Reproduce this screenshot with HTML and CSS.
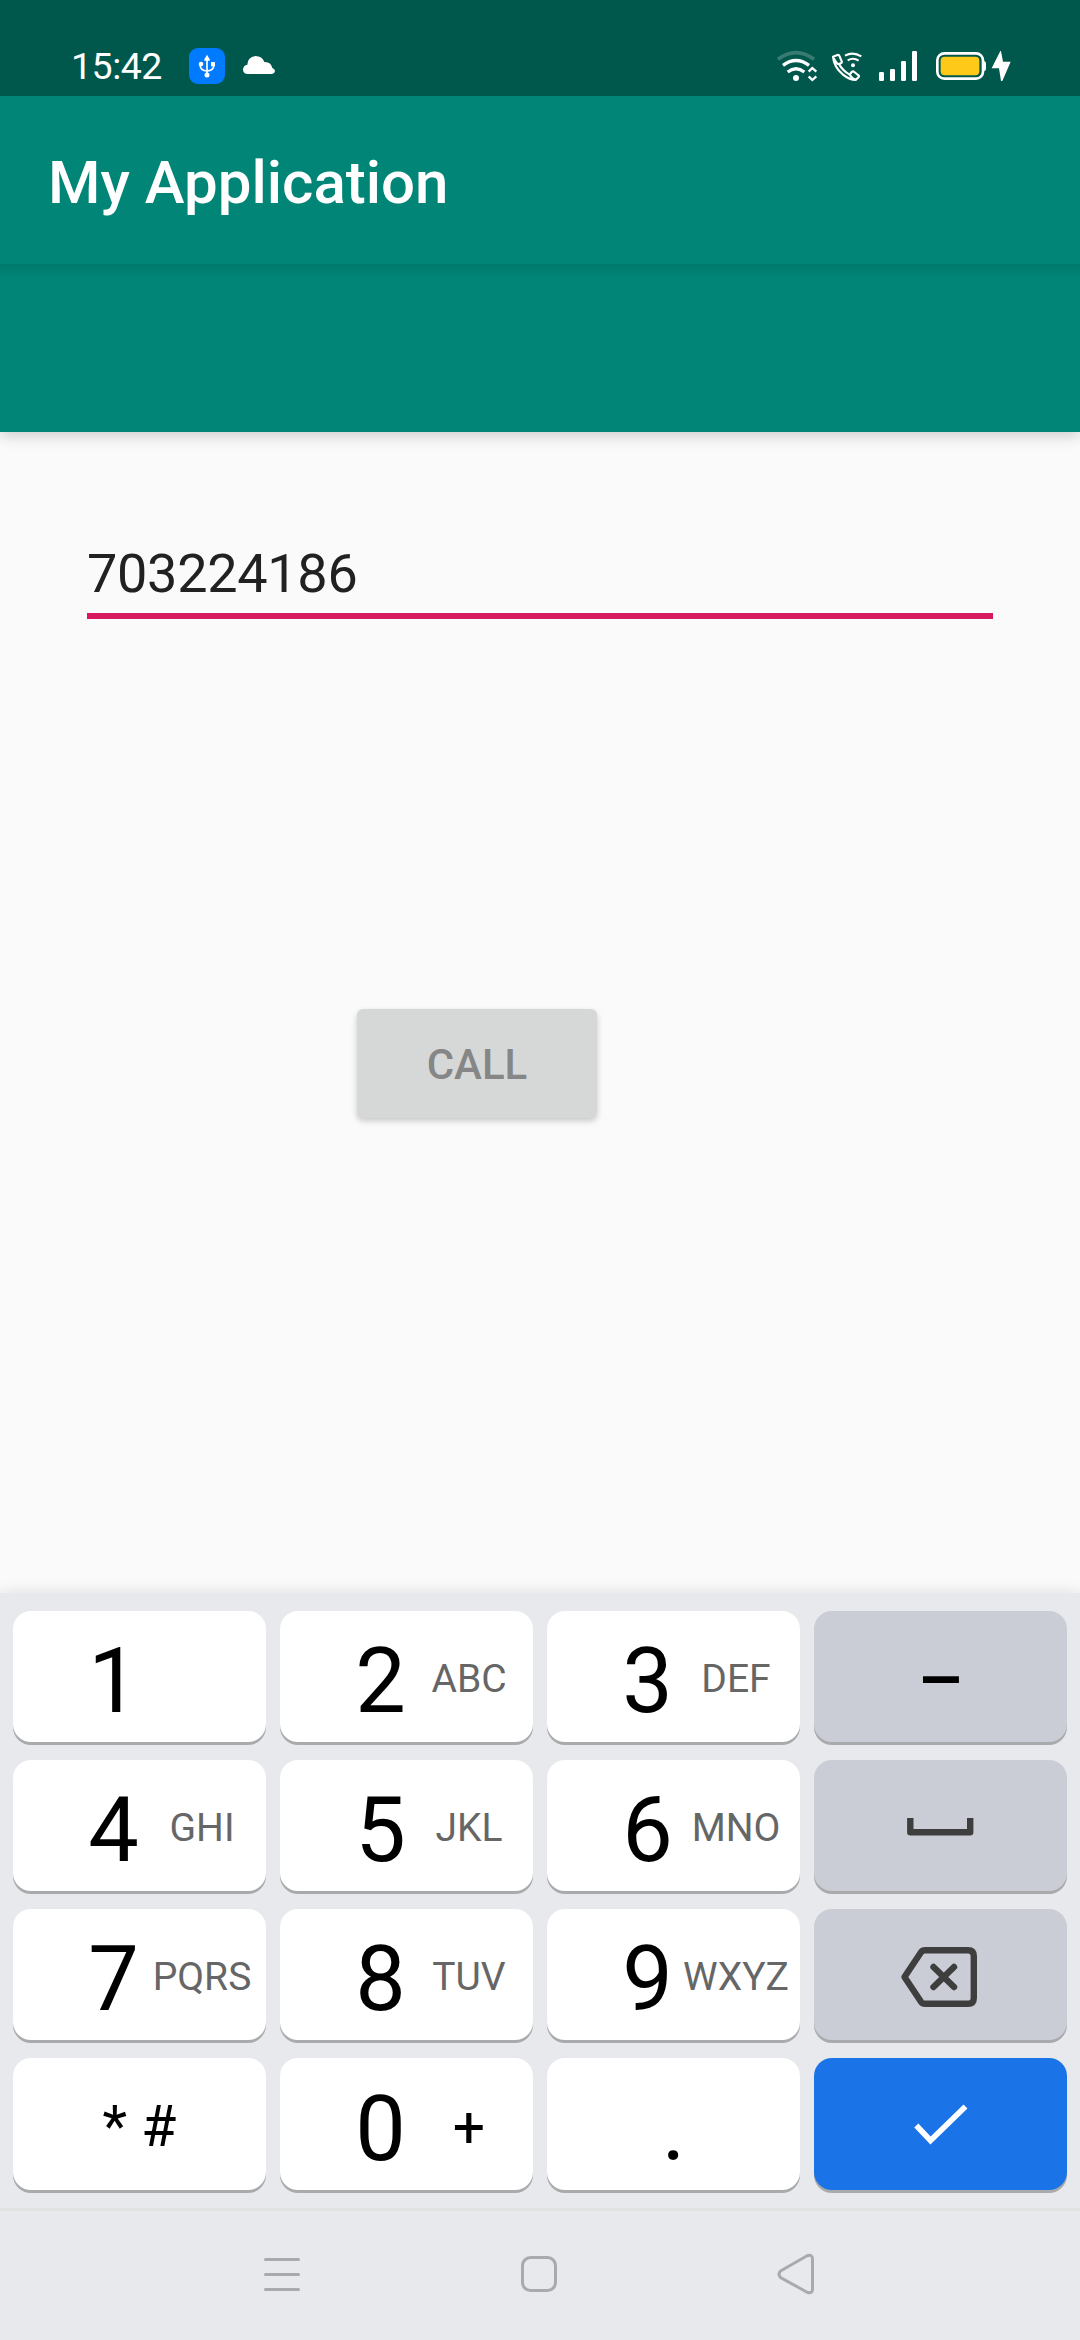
FILE: index.html
```html
<!DOCTYPE html>
<html lang="en">
<head>
<meta charset="utf-8">
<title>My Application</title>
<link rel="stylesheet" href="styles.css">
</head>
<body>
<div class="screen">
  <header class="status-bar">
    <span class="clock">15:42</span>
    <span class="usb-badge">
      <svg width="36" height="36" viewBox="0 0 108 108" fill="none" stroke="#fff" stroke-width="5">
        <path d="M54 27V84M34 50v4q0 13 20 15q20-2 20-15v-4"/>
        <path d="M54 20l8 14v4H46v-4z" fill="#fff" stroke="none"/>
        <circle cx="36" cy="48" r="7" fill="#fff" stroke="none"/>
        <rect x="66" y="42" width="12" height="13" fill="#fff" stroke="none"/>
        <circle cx="54" cy="81" r="7.500" fill="#fff" stroke="none"/>
      </svg>
    </span>
    <svg class="cloud" width="32" height="18" viewBox="0 0 96 54" fill="#fff">
      <path d="M12 54Q0 53 0 40Q1 28 13 26Q14 3 37 0Q58 0 64 18Q84 17 88 36Q96 38 96 46Q95 53 87 54Z"/>
    </svg>
    <div class="status-icons">
      <svg class="wifi" width="41" height="32" viewBox="111 90 123 96" fill="none" stroke="#fff" stroke-width="10">
        <path d="M114 118Q168 78 222 118" stroke-opacity=".22" stroke-width="11"/>
        <path d="M129 136Q168 107 207 136M143 156Q168 137 193 156"/>
        <circle cx="168" cy="174" r="9" fill="#fff" stroke="none"/>
        <path d="M206 155L217 144L229 155M206 169L217 180L229 169" stroke-width="7"/>
      </svg>
      <svg class="wifi-call" width="32" height="32" viewBox="273 90 96 96" fill="none" stroke="#fff" stroke-width="6.500" stroke-linejoin="round">
        <path d="M279 110L292 105Q297 104 299 109L305 124Q307 128 302 130L297 132L293 132Q285 124 279 110ZM279 110Q282 142 309 164Q329 180 347 180L356 171Q359 168 354 165L343 156Q339 152 335 156L329 164Q333 172 347 180M297 132Q307 151 329 164"/>
        <path d="M315 107Q339 94 364 109M323 121Q340 111 356 122"/>
        <circle cx="339" cy="136" r="6" fill="#fff" stroke="none"/>
      </svg>
      <svg class="signal" width="40" height="32" viewBox="414 90 120 96" fill="#fff">
        <rect x="417" y="156" width="15" height="27" rx="4"/>
        <rect x="450" y="147" width="15" height="36" rx="4"/>
        <rect x="483" y="123" width="15" height="60" rx="4"/>
        <rect x="516" y="93" width="15" height="90" rx="4"/>
      </svg>
      <svg class="battery" width="52" height="32" viewBox="585 90 156 96">
        <rect x="592" y="100" width="137" height="76" rx="21" fill="none" stroke="#fff" stroke-width="8"/>
        <path d="M731 123Q738 124 738 130V147Q738 153 731 154Z" fill="#fff"/>
        <rect x="602" y="110" width="116" height="56" rx="12" fill="#ffc919"/>
      </svg>
      <svg class="bolt" width="20" height="32" viewBox="753 90 60 96" fill="#fff">
        <path d="M781 93L755 145H777L783 183H787L812 125H789L783 93Z"/>
      </svg>
    </div>
  </header>

  <div class="app-bar">My Application</div>
  <div class="toolbar"></div>

  <main class="content">
    <div class="phone-field">703224186</div>
    <button class="call-button" disabled>CALL</button>
  </main>

  <section class="keyboard">
    <div class="key"><span class="digit">1</span></div>
    <div class="key"><span class="digit">2</span><span class="letters">ABC</span></div>
    <div class="key"><span class="digit">3</span><span class="letters">DEF</span></div>
    <div class="key key-alt"><span class="dash">–</span></div>

    <div class="key"><span class="digit">4</span><span class="letters">GHI</span></div>
    <div class="key"><span class="digit">5</span><span class="letters">JKL</span></div>
    <div class="key"><span class="digit">6</span><span class="letters">MNO</span></div>
    <div class="key key-alt">
      <svg width="253" height="131" viewBox="0 0 253 131" fill="none" stroke="#3e3e3f" stroke-width="6.400" stroke-linejoin="round">
        <path d="M96.300 58V72.300H156.200V58"/>
      </svg>
    </div>

    <div class="key"><span class="digit">7</span><span class="letters">PQRS</span></div>
    <div class="key"><span class="digit">8</span><span class="letters">TUV</span></div>
    <div class="key"><span class="digit">9</span><span class="letters">WXYZ</span></div>
    <div class="key key-alt">
      <svg width="253" height="131" viewBox="0 0 253 131" fill="none" stroke="#3e3e3f" stroke-width="6.400" stroke-linejoin="round" stroke-linecap="round">
        <path d="M90.500 68L107 43.200Q108.500 41.200 111 41.200H154Q159.800 41.200 159.800 47V89Q159.800 94.800 154 94.800H111Q108.500 94.800 107 92.800Z"/>
        <path d="M119.500 58L140 78M140 58L119.500 78"/>
      </svg>
    </div>

    <div class="key"><span class="symbols">* #</span></div>
    <div class="key"><span class="digit">0</span><span class="letters plus">+</span></div>
    <div class="key"><span class="period">.</span></div>
    <div class="key key-enter">
      <svg width="253" height="132" viewBox="0 0 253 132" fill="none" stroke="#fff" stroke-width="5.600">
        <path d="M102.300 67.500L116.500 82.500L151.500 48.500"/>
      </svg>
    </div>
  </section>

  <nav class="nav-bar">
    <svg width="36" height="42" viewBox="0 0 36 42" stroke="#a9aaac" stroke-width="3" stroke-linecap="round">
      <path d="M1.500 6.500H34.500M1.500 21.500H34.500M1.500 36.500H34.500"/>
    </svg>
    <svg width="38" height="42" viewBox="0 0 38 42" fill="none" stroke="#a9aaac" stroke-width="3">
      <rect x="2.500" y="4.500" width="33" height="33" rx="8"/>
    </svg>
    <svg width="38" height="42" viewBox="0 0 38 42" fill="none" stroke="#a9aaac" stroke-width="3">
      <path d="M3.500 18L30 2.800Q35.500 1 35.500 6V36.500Q35.500 41 30 39.200L3.500 24.500Q.500 21.300 3.500 18Z"/>
    </svg>
  </nav>
</div>
</body>
</html>
```
FILE: styles.css
```css
* { box-sizing: border-box; }

body {
  margin: 0;
  font-family: Roboto, "Liberation Sans", sans-serif;
  background: #fafafa;
}

svg { display: block; flex: none; }

.screen {
  width: 1080px;
  height: 2340px;
  display: flex;
  flex-direction: column;
  overflow: hidden;
}

.status-bar {
  height: 96px;
  flex: none;
  display: flex;
  align-items: center;
  padding: 36px 69px 0 71px;
  background: #00574b;
  color: #fff;
}

.clock {
  width: 118px;
  font-size: 37.5px;
  line-height: 60px;
  letter-spacing: -.5px;
}

.usb-badge {
  width: 36px;
  height: 36px;
  border-radius: 9px;
  background: #007bff;
}

.cloud { margin: -2px 0 0 18px; }

.status-icons {
  display: flex;
  margin-left: auto;
}

.wifi-call { margin-left: 13px; }
.signal { margin-left: 15px; }
.battery { margin-left: 17px; }
.bolt { margin-left: 4px; }

.app-bar,
.toolbar {
  height: 168px;
  flex: none;
  background: #008577;
}

.app-bar {
  padding: 5px 48px 0;
  color: #fff;
  font-size: 60px;
  font-weight: 500;
  line-height: 164px;
}

/* the clip keeps the drop shadow off the app bar above */
.toolbar {
  background: linear-gradient(#00796c, #008577 14px);
  box-shadow: 0 3px 15px rgba(0, 0, 0, .2);
  clip-path: inset(0 0 -30px 0);
}

.content {
  flex: 1;
  display: flex;
  flex-direction: column;
  align-items: flex-start;
  padding: 101px 87px 0;
}

.phone-field {
  width: 906px;
  height: 86px;
  border-bottom: 6px solid #d81b60;
  color: #212121;
  font-size: 54px;
  line-height: 81px;
  letter-spacing: -.3px;
}

.call-button {
  width: 240px;
  height: 109px;
  margin: 390px 0 0 270px;
  padding: 2px 0 0;
  border: 0;
  border-radius: 6px;
  background: #d6d8d7;
  box-shadow: 0 3px 6px rgba(0, 0, 0, .2);
  color: #868686;
  font: 500 42px/107px Roboto, "Liberation Sans", sans-serif;
}

.keyboard {
  height: 618px;
  flex: none;
  display: grid;
  grid-template-columns: repeat(4, 253px);
  grid-template-rows: 131px 131px 131px 132px;
  gap: 18px 14px;
  padding: 18px 13px 15px;
  border-bottom: 3px solid #e0e2e1;
  background: #e8e9ed;
  box-shadow: 0 0 15px rgba(0, 0, 0, .12);
}

.key {
  display: flex;
  align-items: center;
  border-radius: 18px;
  background: #fff;
  box-shadow: 0 3px 0 #a9aaac;
  color: #000;
}

.key-alt { background: #cbcdd6; justify-content: center; }
.key-enter { background: #1b73e8; }

.digit {
  width: 51px;
  margin-left: 75px;
  padding-top: 11px;
  font-size: 90px;
  line-height: 122px;
  text-align: center;
}

.letters {
  width: 126px;
  padding-top: 6px;
  color: #666;
  font-size: 39px;
  line-height: 127px;
  text-align: center;
}

.plus {
  color: #000;
  font-size: 57px;
}

.symbols {
  width: 253px;
  padding-top: 5px;
  font-size: 57px;
  line-height: 127px;
  text-align: center;
}

.dash {
  padding-top: 8px;
  font-size: 72px;
  font-weight: 500;
  line-height: 131px;
}

.period {
  width: 253px;
  padding-top: 10px;
  font-size: 90px;
  line-height: 122px;
  text-align: center;
}

.nav-bar {
  height: 129px;
  flex: none;
  display: flex;
  justify-content: space-between;
  padding: 42px 265px 0 264px;
  background: #e8e9ed;
}
```
